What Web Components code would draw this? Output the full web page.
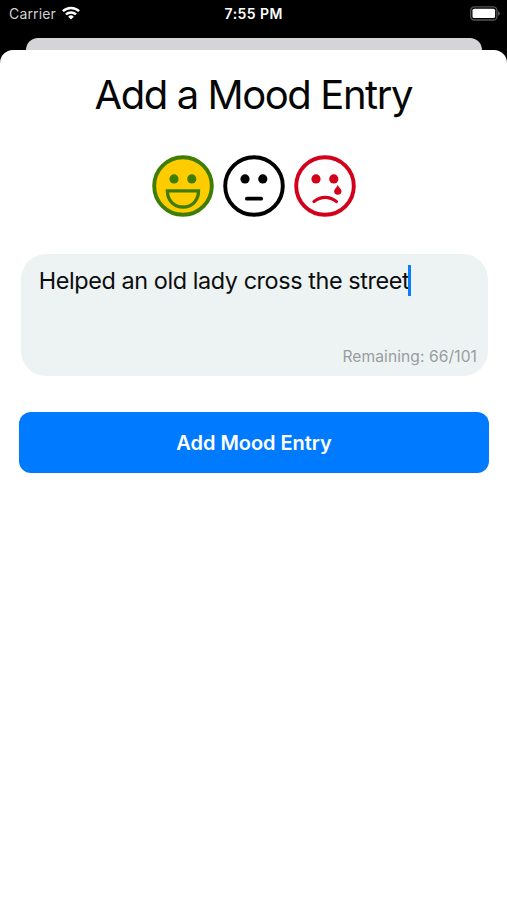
<!DOCTYPE html>
<html lang="en">
<head>
<meta charset="utf-8">
<title>Add a Mood Entry</title>
<style>
html,body{margin:0;height:100%;background:#000}
body{font-family:Inter,"Liberation Sans",sans-serif;overflow:hidden}
</style>
</head>
<body>
<mood-app></mood-app>
<script>
function define(name, html){
  customElements.define(name, class extends HTMLElement{
    constructor(){
      super();
      this.attachShadow({mode:'open'}).innerHTML = html;
    }
  });
}

define('status-bar', `
<style>
:host{display:grid;grid-template-columns:1fr auto 1fr;align-items:center;height:27px;padding:0 7.5px 0 9px;box-sizing:border-box;color:#fff;font-size:14px;line-height:27px;white-space:nowrap}
.left{display:flex;align-items:center;gap:6.2px;color:#d0d0d0}
.carrier{letter-spacing:.15px}
.time{font-weight:600;letter-spacing:.45px;margin-left:-1px}
.right{display:flex;justify-content:flex-end}
svg{display:block}
.left svg{margin-top:-1px}
</style>
<div class="left"><span class="carrier">Carrier</span>
<svg width="18" height="14" viewBox="0 0 18 14" fill="none" stroke="#fff" stroke-width="2.5"><path d="M.9 5.2a11.6 11.6 0 0 1 16.2 0M4 8.4a7.2 7.2 0 0 1 10 0"/><path d="M9 13.5 6.2 10.7a4 4 0 0 1 5.6 0z" fill="#fff" stroke="none"/></svg></div>
<span class="time">7:55 PM</span>
<div class="right"><svg width="30" height="15" viewBox="0 0 30 15"><rect x=".7" y=".8" width="26.2" height="13.2" rx="3.6" fill="none" stroke="#555" stroke-width="1.3"/><rect x="2.5" y="2.7" width="22.6" height="9.4" rx="1.6" fill="#fff"/><path d="M28.1 5.1q1.7.8 1.7 2.3t-1.7 2.3z" fill="#666"/></svg></div>`);

define('modal-sheet', `
<style>
:host{display:flex;flex-direction:column;flex:1;padding-top:10.5px}
.behind{height:12.5px;margin:0 24.8px 0 25.5px;background:#d5d5d7;border-radius:12px 12px 0 0}
.sheet{flex:1;background:#fff;border-radius:13px 13px 0 0;padding:0 18px 0 19px;display:flex;flex-direction:column}
</style>
<div class="behind"></div><div class="sheet"><slot></slot></div>`);

define('sheet-title', `
<style>
:host{display:block;text-align:center;height:105px;padding-top:20px;box-sizing:border-box;font-size:40px;line-height:50px;color:#060606;white-space:nowrap;letter-spacing:-1.42px;margin-left:-1.4px}
</style><slot></slot>`);

const FACES = {
  happy:{color:'#3f7d00',fill:'#fc0',extra:'<path d="M-15.6 4.8H15.5C15.5 14.5 9 21 0 21S-15.6 14.5-15.6 4.8Z" fill="none" stroke="currentColor" stroke-width="3.3"/>'},
  neutral:{color:'#000',fill:'none',extra:'<path d="M-7.2 12.7H7.2" stroke="currentColor" stroke-width="3.7" stroke-linecap="round"/>'},
  sad:{color:'#d3001b',fill:'none',extra:'<path d="M-11 15.5Q0 7.3 11.4 15.5" fill="none" stroke="currentColor" stroke-width="3.3" stroke-linecap="round"/><path d="M12.8-1.1C13.8 1.6 16.5 2.9 16.5 5.1A3.7 3.7 0 0 1 9.1 5.1C9.1 2.9 11.8 1.6 12.8-1.1Z" fill="currentColor"/>'}
};
customElements.define('mood-face', class extends HTMLElement{
  constructor(){
    super();
    this.attachShadow({mode:'open'});
  }
  connectedCallback(){
    const f = FACES[this.getAttribute('mood')];
    this.shadowRoot.innerHTML = `
<style>:host{display:block;color:${f.color}}svg{display:block}</style>
<svg width="62" height="62" viewBox="-31 -31 62 62"><circle r="28.8" fill="${f.fill}" stroke="currentColor" stroke-width="3.9"/><g fill="currentColor"><circle cx="-9" cy="-7.1" r="4.6"/><circle cx="8.8" cy="-7.1" r="4.6"/></g>${f.extra}</svg>`;
  }
});

define('mood-picker', `
<style>:host{display:flex;justify-content:center;gap:9px;box-sizing:border-box;height:98.5px;margin-left:-1px}</style>
<mood-face mood="happy"></mood-face><mood-face mood="neutral"></mood-face><mood-face mood="sad"></mood-face>`);

define('entry-field', `
<style>
:host{display:flex;flex-direction:column;justify-content:space-between;box-sizing:border-box;height:122px;margin:0 1.5px;padding:11px 10.5px 9px 18.3px;background:#edf2f3;border-radius:25px}
.text{display:flex;align-items:center;height:31px;font-size:23.4px;line-height:31px;color:#0b0d0d;letter-spacing:-.41px;white-space:nowrap}
.text slot{display:block;padding-top:1px}
.caret{width:3px;height:31px;background:#0a7aff;margin-left:-1.3px}
.count{align-self:flex-end;font-size:15.6px;line-height:20px;letter-spacing:.08px;color:#999da0;white-space:nowrap}
</style>
<div class="text"><slot></slot><span class="caret"></span></div>
<div class="count"><slot name="count"></slot></div>`);

define('primary-button', `
<style>
:host{display:block;margin-top:36.7px}
button{display:block;width:100%;height:61px;border:0;padding:1px 0 0;border-radius:12px;background:#007aff;color:#fff;font:600 20px/60px Inter,"Liberation Sans",sans-serif;letter-spacing:-.05px;white-space:nowrap}
</style><button><slot></slot></button>`);

define('mood-app', `
<style>:host{display:flex;flex-direction:column;width:100%;height:100vh;background:#000}</style>
<status-bar></status-bar>
<modal-sheet>
<sheet-title>Add a Mood Entry</sheet-title>
<mood-picker></mood-picker>
<entry-field>Helped an old lady cross the street<span slot="count">Remaining: 66/101</span></entry-field>
<primary-button>Add Mood Entry</primary-button>
</modal-sheet>`);
</script>
</body>
</html>
